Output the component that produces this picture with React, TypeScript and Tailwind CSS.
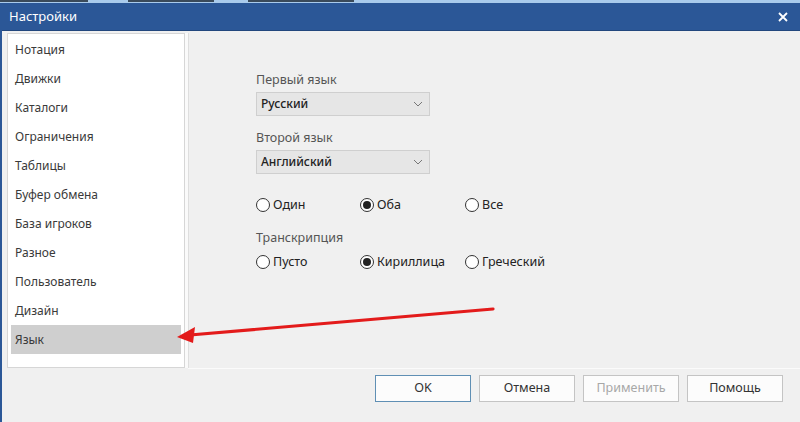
import React from "react";

const items = [
  "Нотация",
  "Движки",
  "Каталоги",
  "Ограничения",
  "Таблицы",
  "Буфер обмена",
  "База игроков",
  "Разное",
  "Пользователь",
  "Дизайн",
  "Язык",
];

function Radio({ label, checked, w }: { label: string; checked?: boolean; w: string }) {
  return (
    <div className={`flex items-center ${w}`}>
      <span className="w-[14px] h-[14px] rounded-full border border-[#333] bg-white flex items-center justify-center shrink-0">
        {checked && <span className="w-[8px] h-[8px] rounded-full bg-[#222]" />}
      </span>
      <span className="ml-[3px] text-[12.5px] text-[#222]">{label}</span>
    </div>
  );
}

function Select({ value }: { value: string }) {
  return (
    <div className="w-[174px] h-[24px] bg-[#e6e6e6] border border-[#cfcfcf] flex items-center justify-between pl-[4px] pr-[6px]">
      <span className="text-[12px] font-medium text-[#222]">{value}</span>
      <svg width="10" height="6" viewBox="0 0 10 6">
        <path d="M1 1 L5 5 L9 1" fill="none" stroke="#777" strokeWidth="1" />
      </svg>
    </div>
  );
}

function Btn({ label, primary, disabled }: { label: string; primary?: boolean; disabled?: boolean }) {
  return (
    <div
      className={`w-[96px] h-[27px] flex items-center justify-center text-[12.5px] bg-[#fcfcfc] border ${
        primary ? "border-[#5f8fb4]" : "border-[#c4c4c4]"
      } ${disabled ? "text-[#a8a8a8]" : "text-[#333]"}`}
    >
      {label}
    </div>
  );
}

export default function App() {
  return (
    <div
      className="w-[800px] h-[422px] bg-[#f0f0f0] relative overflow-hidden"
      style={{ fontFamily: '"Noto Sans", "Open Sans", sans-serif' }}
    >
      <div className="h-[3px] bg-[#a9cbec] overflow-hidden flex">
        <div className="w-[88px] h-[2px] bg-[#3a4a5a] shrink-0" />
        <div className="w-[86px] h-[2px] bg-[#3a4a5a] ml-[40px] shrink-0" />
        <div className="w-[106px] h-[2px] bg-[#3a4a5a] ml-[34px] shrink-0" />
      </div>
      <div className="border-l-2 border-[#2b5797] h-[419px] flex flex-col">
        <div className="h-[28px] bg-[#2b5797] border-b border-[#22477d] flex items-center justify-between pl-[7px] pr-[12px] text-white">
          <span className="text-[13px]">Настройки</span>
          <svg width="10" height="10" viewBox="0 0 10 10">
            <path d="M1 1 L9 9 M9 1 L1 9" stroke="white" strokeWidth="1.8" />
          </svg>
        </div>
        <div className="flex h-[337px] pt-[2px]">
          <div className="ml-[5px] w-[178px] h-[335px] bg-white border border-[#d6d6d6] pt-[1px] px-[3px]">
            {items.map((it) => (
              <div
                key={it}
                className={`h-[29px] flex items-center px-[4px] text-[12px] text-[#3a3a3a] ${
                  it === "Язык" ? "bg-[#cfcfcf]" : ""
                }`}
              >
                {it}
              </div>
            ))}
          </div>
          <div className="w-[3px] bg-[#fafafa]" />
          <div className="w-[1px] bg-[#dedede]" />
          <div className="flex-1 pl-[67px] pt-[38px]">
            <div className="text-[12.5px] text-[#555] leading-[18px]">Первый язык</div>
            <div className="mt-[3px]">
              <Select value="Русский" />
            </div>
            <div className="text-[12.5px] text-[#555] leading-[18px] mt-[13px]">Второй язык</div>
            <div className="mt-[3px]">
              <Select value="Английский" />
            </div>
            <div className="flex mt-[22px]">
              <Radio label="Один" w="w-[104px]" />
              <Radio label="Оба" checked w="w-[105px]" />
              <Radio label="Все" w="w-[100px]" />
            </div>
            <div className="text-[12.5px] text-[#555] leading-[18px] mt-[14px]">Транскрипция</div>
            <div className="flex mt-[6px]">
              <Radio label="Пусто" w="w-[104px]" />
              <Radio label="Кириллица" checked w="w-[105px]" />
              <Radio label="Греческий" w="w-[100px]" />
            </div>
          </div>
        </div>
        <div className="flex">
          <div className="w-[186px]" />
          <div className="flex-1 border-t border-[#fbfbfb]" />
        </div>
        <div className="flex justify-end pr-[17px] pt-[6px] gap-[8px]">
          <Btn label="OK" primary />
          <Btn label="Отмена" />
          <Btn label="Применить" disabled />
          <Btn label="Помощь" />
        </div>
      </div>
      <svg className="absolute left-0 top-0" width="800" height="422" viewBox="0 0 800 422">
        <path d="M493 309 L190 335" stroke="#e31b1b" strokeWidth="3.2" strokeLinecap="round" />
        <path d="M177 337 L195 327 L193 343 Z" fill="#e31b1b" />
      </svg>
    </div>
  );
}
